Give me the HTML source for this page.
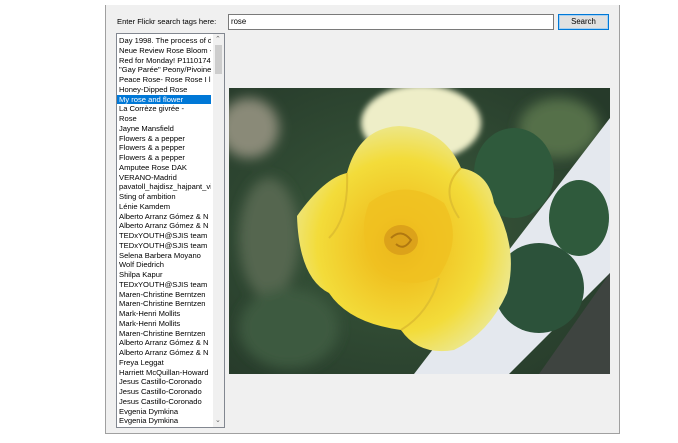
<!DOCTYPE html>
<html><head><style>
body{margin:0;width:678px;height:443px;background:#fff;position:relative;overflow:hidden;font-family:"Liberation Sans",sans-serif;}
.win{position:absolute;left:105px;top:5px;width:513px;height:428px;background:#f0f0f0;border:1px solid #a0a0a0;border-top:none;}
.lbl{position:absolute;left:117px;top:17px;font-size:7.6px;color:#000;}
.tb{position:absolute;left:228px;top:14px;width:322px;height:14px;background:#fff;border:1px solid #7a7a7a;font-size:7.8px;line-height:14px;padding-left:2px;}
.btn{position:absolute;left:558px;top:14px;width:49px;height:14px;background:#e1e1e1;border:1px solid #0078d7;box-shadow:inset 0 0 0 1px #a8d0f0;font-size:7.8px;text-align:center;line-height:14px;}
.list{position:absolute;left:116px;top:33px;width:107px;height:393px;background:#fff;border:1px solid #828790;overflow:hidden;}
.it{height:9.75px;line-height:9.75px;font-size:7.6px;padding-left:2px;white-space:nowrap;overflow:hidden;width:92px;}
.sel{background:#0078d7;color:#fff;}
.sb{position:absolute;right:0;top:0;width:11px;height:393px;background:#f0f0f0;}
.thumb{position:absolute;left:2px;top:11px;width:7px;height:29px;background:#cdcdcd;}
.ar{position:absolute;left:2px;font-size:7px;color:#606060;}
.img{position:absolute;left:229px;top:88px;width:381px;height:286px;}
</style></head><body>
<div class="win"></div>
<div class="lbl">Enter Flickr search tags here:</div>
<div class="tb">rose</div>
<div class="btn">Search</div>
<div class="list">
<div class="it" style="margin-top:2px">Day 1998. The process of da</div>
<div class="it">Neue Review Rose Bloom -</div>
<div class="it">Red for Monday!  P1110174</div>
<div class="it">"Gay Parée" Peony/Pivoine</div>
<div class="it">Peace Rose-  Rose Rose I lo</div>
<div class="it">Honey-Dipped Rose</div>
<div class="it sel">My rose and flower</div>
<div class="it">La Corrèze givrée -</div>
<div class="it">Rose</div>
<div class="it">Jayne Mansfield</div>
<div class="it">Flowers &amp; a pepper</div>
<div class="it">Flowers &amp; a pepper</div>
<div class="it">Flowers &amp; a pepper</div>
<div class="it">Amputee Rose DAK</div>
<div class="it">VERANO-Madrid</div>
<div class="it">pavatoll_hajdisz_hajpant_vi</div>
<div class="it">Sting of ambition</div>
<div class="it">Lénie Kamdem</div>
<div class="it">Alberto Arranz Gómez &amp; N</div>
<div class="it">Alberto Arranz Gómez &amp; N</div>
<div class="it">TEDxYOUTH@SJIS team</div>
<div class="it">TEDxYOUTH@SJIS team</div>
<div class="it">Selena Barbera Moyano</div>
<div class="it">Wolf Diedrich</div>
<div class="it">Shilpa Kapur</div>
<div class="it">TEDxYOUTH@SJIS team</div>
<div class="it">Maren-Christine Berntzen</div>
<div class="it">Maren-Christine Berntzen</div>
<div class="it">Mark-Henri Mollits</div>
<div class="it">Mark-Henri Mollits</div>
<div class="it">Maren-Christine Berntzen</div>
<div class="it">Alberto Arranz Gómez &amp; N</div>
<div class="it">Alberto Arranz Gómez &amp; N</div>
<div class="it">Freya Leggat</div>
<div class="it">Harriett McQuillan-Howard</div>
<div class="it">Jesus Castillo-Coronado</div>
<div class="it">Jesus Castillo-Coronado</div>
<div class="it">Jesus Castillo-Coronado</div>
<div class="it">Evgenia Dymkina</div>
<div class="it">Evgenia Dymkina</div>
<div class="sb"><span class="ar" style="top:1px">&#8963;</span><div class="thumb"></div><span class="ar" style="bottom:3px">&#8964;</span></div>
</div>
<svg class="img" viewBox="0 0 381 286" width="381" height="286">
<defs>
<radialGradient id="bg" cx="0.45" cy="0.5" r="0.7"><stop offset="0" stop-color="#3a5a3c"/><stop offset="1" stop-color="#263a2a"/></radialGradient>
<radialGradient id="rose" cx="0.48" cy="0.53" r="0.55"><stop offset="0" stop-color="#d89a10"/><stop offset="0.25" stop-color="#f0c020"/><stop offset="0.7" stop-color="#f3dc3a"/><stop offset="1" stop-color="#ece890"/></radialGradient>
<filter id="bl"><feGaussianBlur stdDeviation="6"/></filter>
<filter id="bl2"><feGaussianBlur stdDeviation="3"/></filter>
</defs>
<rect width="381" height="286" fill="url(#bg)"/>
<g filter="url(#bl)">
<ellipse cx="20" cy="40" rx="30" ry="30" fill="#8a8a78"/>
<ellipse cx="40" cy="150" rx="30" ry="60" fill="#556650"/>
<ellipse cx="60" cy="240" rx="50" ry="40" fill="#3e5a40"/>
<ellipse cx="330" cy="40" rx="40" ry="30" fill="#55704a"/>
</g>
<ellipse cx="192" cy="35" rx="60" ry="38" fill="#eeeec8" filter="url(#bl2)"/>
<polygon points="381,30 381,185 280,286 185,286" fill="#e4e8ee"/>
<polygon points="381,185 381,286 310,286" fill="#3e4440"/>
<ellipse cx="285" cy="85" rx="40" ry="45" fill="#2f5a3c"/>
<ellipse cx="350" cy="130" rx="30" ry="38" fill="#2f5a3c"/>
<ellipse cx="310" cy="200" rx="45" ry="45" fill="#2c523a"/>
<path d="M68,128 Q95,90 118,85 Q130,40 170,38 Q215,40 232,80 Q260,85 265,115 Q290,160 278,205 Q260,245 225,262 Q190,268 172,242 Q120,235 100,205 Q70,190 68,128Z" fill="url(#rose)"/>
<path d="M118,85 Q120,130 100,150 M232,80 Q210,100 230,130 M172,242 Q200,225 210,190" fill="none" stroke="#e0c030" stroke-width="2"/>
<path d="M140,115 Q175,88 215,115 Q235,150 210,188 Q180,204 150,183 Q126,152 140,115Z" fill="#f0c020" opacity="0.8"/>
<ellipse cx="172" cy="152" rx="17" ry="15" fill="#dca21a"/>
<path d="M162,150 Q172,140 182,152 Q175,163 167,156" fill="none" stroke="#b07810" stroke-width="2"/>
</svg>
</body></html>
